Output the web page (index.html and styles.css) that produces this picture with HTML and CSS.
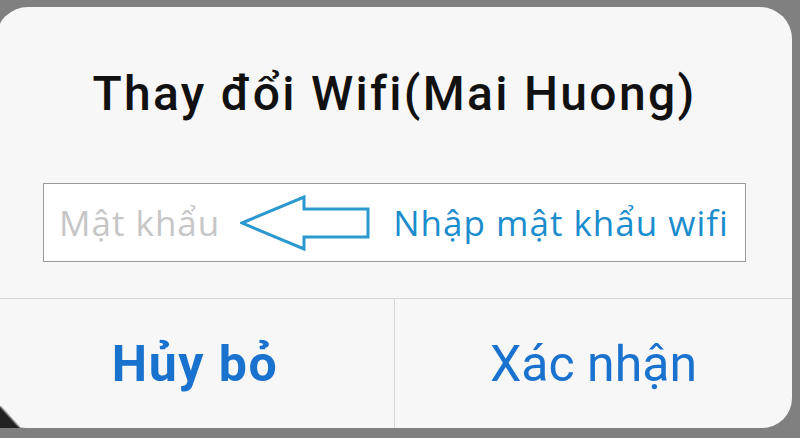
FILE: index.html
```html
<!DOCTYPE html>
<html lang="vi">
<head>
    <meta charset="UTF-8">
    <meta name="viewport" content="width=device-width, initial-scale=1.0">
    <title>Thay đổi Wifi</title>
    <link rel="stylesheet" href="styles.css">
</head>
<body>
    <div class="alert">
        <div class="alert-body">
            <h1 class="alert-title">Thay đổi Wifi(Mai Huong)</h1>
            <div class="field">
                <span class="placeholder">Mật khẩu</span>
                <svg class="hint-arrow" width="130" height="56" viewBox="0 0 130 56">
                    <path d="M2 28 L64 2 L64 14 L128 14 L128 42 L64 42 L64 54 Z" fill="none" stroke="#2b98cf" stroke-width="3" stroke-linejoin="miter"/>
                </svg>
                <span class="hint">Nhập mật khẩu wifi</span>
            </div>
        </div>
        <div class="alert-actions">
            <button class="action action-cancel">Hủy bỏ</button>
            <button class="action">Xác nhận</button>
        </div>
        <div class="corner-shadow"></div>
    </div>
</body>
</html>
```

FILE: styles.css
```css
body, html {
    margin: 0;
    padding: 0;
    background-color: #808080;
    font-family: Roboto, "Noto Sans", sans-serif;
    overflow: hidden;
}

.alert {
    position: relative;
    width: 796px;
    height: 421px;
    margin: 7px 0 0 -4px;
    background-color: #f7f7f7;
    border-radius: 32px 32px 30px 30px;
    display: flex;
    flex-direction: column;
}

.alert-body {
    height: 291px;
    padding: 0 46px 0 47px;
    box-sizing: border-box;
}

.alert-title {
    margin: 0;
    padding-top: 57px;
    font-size: 48px;
    font-weight: 500;
    letter-spacing: 2.3px;
    line-height: 60px;
    color: #111;
    text-align: center;
}

.field {
    margin-top: 59px;
    height: 79px;
    box-sizing: border-box;
    border: 1px solid #9a9a9a;
    background-color: #fff;
    display: flex;
    align-items: center;
    padding-left: 15px;
    font-family: "Open Sans", sans-serif;
    font-size: 35px;
    letter-spacing: 1px;
}

.placeholder {
    color: #c6c6c6;
}

.hint-arrow {
    margin-left: 20px;
}

.hint {
    margin-left: 23px;
    color: #1b8dcd;
}

.alert-actions {
    flex: 1;
    display: grid;
    grid-template-columns: 399px 1fr;
    border-top: 1px solid #d4d4d4;
}

.action {
    border: none;
    background: none;
    font-family: Roboto, "Noto Sans", sans-serif;
    font-size: 50px;
    color: #1a72cf;
    padding: 0;
}

.action-cancel {
    font-weight: 700;
    letter-spacing: 1.5px;
    border-right: 1px solid #d8d8d8;
}

.corner-shadow {
    position: absolute;
    left: 4px;
    bottom: 0;
    width: 20px;
    height: 22px;
    background: linear-gradient(to top right, #222 0 45%, transparent 55%);
}
```
